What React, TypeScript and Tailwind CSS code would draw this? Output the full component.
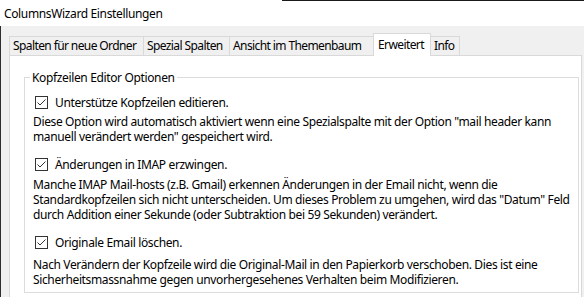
import React from "react";

function Check() {
  return (
    <span className="flex h-[13px] w-[13px] shrink-0 items-center justify-center border border-[#333333] bg-white">
      <svg width="11" height="11" viewBox="0 0 11 11" className="block">
        <polyline points="1.5,5.5 4,8 9.5,2.5" fill="none" stroke="#333333" strokeWidth="1" />
      </svg>
    </span>
  );
}

function CheckRow({ label, className }: { label: string; className?: string }) {
  return (
    <div className={"ml-[2px] flex h-[17px] items-center " + (className ?? "")}>
      <Check />
      <span className="ml-[7px] leading-[15px]">{label}</span>
    </div>
  );
}

export default function App() {
  return (
    <div className="flex h-[297px] w-[584px] flex-col overflow-hidden whitespace-nowrap bg-[#f0f0f0] font-['Noto_Sans',sans-serif] text-[12px] tracking-[-0.03em] text-black">
      <div className="flex h-px shrink-0">
        <div className="w-[282px] bg-white" />
        <div className="flex-1 bg-[#1a1a1a]" />
      </div>
      <div className="flex h-[25px] shrink-0 items-center bg-white pl-[4px]">
        ColumnsWizard Einstellungen
      </div>
      <div className="flex flex-1 flex-col border-l border-[#2f2f2f] pl-[8px] pr-[2px]">
        <div className="mt-[7px] flex h-[22px] shrink-0 items-end tracking-[-0.05em]">
          <div className="flex h-[19px] w-[134px] items-center border-l border-t border-[#d9d9d9] pl-[3px]">
            Spalten für neue Ordner
          </div>
          <div className="flex h-[19px] w-[86px] items-center border-l border-t border-[#d9d9d9] pl-[3px]">
            Spezial Spalten
          </div>
          <div className="flex h-[19px] w-[144px] items-center border-l border-t border-[#d9d9d9] pl-[3px]">
            Ansicht im Themenbaum
          </div>
          <div className="relative z-10 -mb-px flex h-[23px] w-[58px] items-start border-x border-t border-[#d9d9d9] bg-white pl-[4px] pt-[2px]">
            Erweitert
          </div>
          <div className="flex h-[19px] w-[29px] items-center border-r border-t border-[#d9d9d9] pl-[3px]">
            Info
          </div>
        </div>
        <div className="flex flex-1 flex-col border-x border-t border-[#d9d9d9] bg-white">
          <fieldset className="ml-[14px] mt-[14px] h-[223px] w-[555px] border border-[#dcdcdc]">
            <legend className="ml-[5px] px-[2px] leading-[15px]">Kopfzeilen Editor Optionen</legend>
            <div className="flex flex-col pl-[8px] pt-[9px] leading-[15px]">
              <CheckRow label="Unterstütze Kopfzeilen editieren." />
              <div className="mt-[3px] flex flex-col">
                <span>Diese Option wird automatisch aktiviert wenn eine Spezialspalte mit der Option "mail header kann</span>
                <span>manuell verändert werden" gespeichert wird.</span>
              </div>
              <CheckRow label="Änderungen in IMAP erzwingen." className="mt-[12px]" />
              <div className="mt-[4px] flex flex-col">
                <span>Manche IMAP Mail-hosts (z.B. Gmail) erkennen Änderungen in der Email nicht, wenn die</span>
                <span>Standardkopfzeilen sich nicht unterscheiden. Um dieses Problem zu umgehen, wird das "Datum" Feld</span>
                <span>durch Addition einer Sekunde (oder Subtraktion bei 59 Sekunden) verändert.</span>
              </div>
              <CheckRow label="Originale Email löschen." className="mt-[12px]" />
              <div className="mt-[6px] flex flex-col">
                <span>Nach Verändern der Kopfzeile wird die Original-Mail in den Papierkorb verschoben. Dies ist eine</span>
                <span>Sicherheitsmassnahme gegen unvorhergesehenes Verhalten beim Modifizieren.</span>
              </div>
            </div>
          </fieldset>
        </div>
      </div>
    </div>
  );
}
